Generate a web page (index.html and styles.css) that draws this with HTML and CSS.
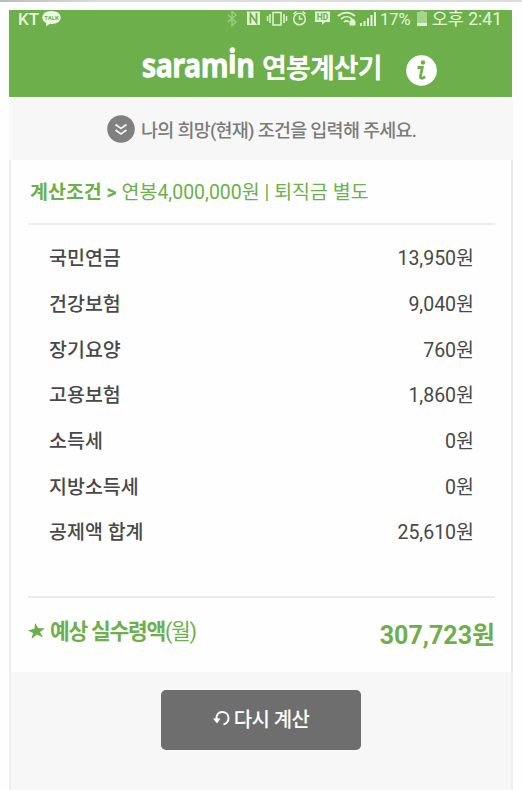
FILE: index.html
```html
<!DOCTYPE html>
<html lang="ko">
<head>
    <meta charset="UTF-8">
    <meta name="viewport" content="width=device-width, initial-scale=1.0">
    <title>saramin 연봉계산기</title>
    <link rel="stylesheet" href="styles.css">
</head>
<body>
    <div class="top-line"></div>
    <div class="app">
        <header class="header">
            <div class="status-bar">
                <div class="status-left">
                    <span>KT</span>
                    <svg class="talk" width="19" height="16" viewBox="0 0 19 16">
                        <path d="M9.500 0C4 0 .3 2.800.3 6.500c0 2.500 1.500 4.500 4 5.600L4 15.500l3.800-2.700c6 .8 10.900-2 10.900-6.300C18.700 2.800 15 0 9.500 0z" fill="#eefbe4"/>
                        <text x="9.500" y="8.800" text-anchor="middle">TALK</text>
                    </svg>
                </div>
                <div class="status-right">
                    <svg width="133" height="18" viewBox="0 0 133 18" fill="none" stroke="#e0f5d0" stroke-width="1.500">
                        <path d="M1 5l8 7-4 3.500V1.500L9 5l-8 7" opacity=".45" stroke-width="1.300"/>
                        <path d="M20 1.500h13V15H20z" fill="#e0f5d0" stroke="none"/>
                        <path d="M23.500 13.500V4l6 8.500V3" stroke="#6db04b" stroke-width="1.800"/>
                        <path d="M46 2.500h8v12.500h-8zM43 4v9M57 4v9M40.500 6v5M59.500 6v5"/>
                        <circle cx="72.500" cy="9" r="5.800"/>
                        <path d="M72.500 5.500V9h3M66.500 4l3-2.500M78.500 4l-3-2.500"/>
                        <path d="M88 1.500h15v10.500h-5l-3 3v-3h-7z" fill="#e0f5d0" stroke="none"/>
                        <text x="95.500" y="9.800" text-anchor="middle">HD</text>
                        <path d="M111 6c5-4.500 12-4.500 17 0M114 9c3.500-3 8-3 11 0M117 12c2-1.500 3.500-1.500 5 0" stroke-width="1.700"/>
                        <path d="M123 11h5v4h-5zM124 11V9.500h3V11" fill="#e0f5d0" stroke-width="1"/>
                    </svg>
                    <svg width="17" height="16" viewBox="0 0 17 16" fill="#e0f5d0">
                        <path d="M0 12h2v3H0zM3.500 10h2v5h-2zM7 7h2v8H7zM10.500 4h2v11h-2zM14 1h2v14h-2z"/>
                    </svg>
                    <span class="percent">17%</span>
                    <svg width="10" height="16" viewBox="0 0 10 16" fill="#e0f5d0">
                        <path d="M3 0h4v1h3v11H0V1h3z" opacity=".5"/>
                        <path d="M0 12h10v3H0z"/>
                    </svg>
                    <span class="time">오후 2:41</span>
                </div>
            </div>
            <h1 class="title">
                <svg class="logo" width="116" height="36" viewBox="0 0 116 36">
                    <g transform="scale(.89 1)">
                        <text x="1" y="29">saram<tspan dy="-4.500">i</tspan><tspan dy="4.500">n</tspan></text>
                    </g>
                </svg>
                <span class="title-text">연봉계산기</span>
                <svg class="info" width="31" height="31" viewBox="0 0 31 31">
                    <circle cx="15.500" cy="15.500" r="15.300" fill="#fff"/>
                    <circle cx="17" cy="7.500" r="2.200" fill="#6db04b"/>
                    <path d="M11.500 12.500h4.800l-1.800 8.500q-.5 2.500 1.500 2.300 1.500-.2 3-2" fill="none" stroke="#6db04b" stroke-width="2.800"/>
                </svg>
            </h1>
        </header>

        <div class="guide">
            <svg width="28" height="28" viewBox="0 0 28 28" fill="none" stroke="#f4f4f4" stroke-width="1.800">
                <circle cx="14" cy="14" r="13.800" fill="#808080" stroke="none"/>
                <path d="M8.500 9.500l5.500 4 5.500-4M8.500 15l5.500 4 5.500-4"/>
            </svg>
            <span>나의 희망(현재) 조건을 입력해 주세요.</span>
        </div>

        <main class="result">
            <p class="condition"><b>계산조건 &gt;</b> 연봉4,000,000원 | 퇴직금 별도</p>
            <dl class="list">
                <div class="row"><dt>국민연금</dt><dd>13,950원</dd></div>
                <div class="row"><dt>건강보험</dt><dd>9,040원</dd></div>
                <div class="row"><dt>장기요양</dt><dd>760원</dd></div>
                <div class="row"><dt>고용보험</dt><dd>1,860원</dd></div>
                <div class="row"><dt>소득세</dt><dd>0원</dd></div>
                <div class="row"><dt>지방소득세</dt><dd>0원</dd></div>
                <div class="row"><dt>공제액 합계</dt><dd>25,610원</dd></div>
            </dl>
            <div class="total">
                <div class="total-label">
                    <svg width="17" height="16" viewBox="0 0 17 16" fill="#6db04b">
                        <path d="M7 0l3.200 5 6.800.5-5 3.500 3 5.500-6-3-5.500 4.500 1.500-6L0 7.500l6.500-1.700z"/>
                    </svg>
                    <span><b>예상 실수령액</b>(월)</span>
                </div>
                <strong class="total-value">307,723원</strong>
            </div>
        </main>

        <footer class="footer">
            <button class="reset">
                <svg width="17" height="17" viewBox="0 0 17 17" fill="none" stroke="#fff" stroke-width="2">
                    <path d="M3.500 9C3 5 5.500 2 9 2c4 0 6.500 2.500 6.500 6 0 3.500-2 5.500-5 6.500"/>
                    <path d="M0 8.500h7.500L4 13.500z" fill="#fff" stroke="none"/>
                </svg>
                <span>다시 계산</span>
            </button>
        </footer>
    </div>
</body>
</html>
```
FILE: styles.css
```css
* {
    box-sizing: border-box;
    margin: 0;
    padding: 0;
}
body {
    width: 522px;
    height: 790px;
    overflow: hidden;
    background-color: #fefefe;
    font-family: Roboto, "Noto Sans CJK KR", sans-serif;
    font-size: 19.500px;
    color: #484848;
}
.top-line {
    height: 2px;
    margin-bottom: 8px;
    background: linear-gradient(to right, #bbb, #ddd 100px);
}
.app {
    display: flex;
    flex-direction: column;
    width: 504px;
    height: 780px;
    margin-left: 9px;
}
.header {
    width: 503px;
    height: 87px;
    background-color: #6db04b;
    color: #fff;
}
.status-bar {
    display: flex;
    justify-content: space-between;
    height: 18px;
    padding: 0 10px 0 9px;
    line-height: 17px;
    color: #e6f7da;
}
.status-left,
.status-right {
    display: flex;
    align-items: center;
}
.status-left {
    gap: 3px;
    font-size: 17px;
    font-weight: 500;
}
.talk text {
    font-size: 6px;
    font-weight: 700;
    fill: #6db04b;
}
.status-right {
    font-size: 17.500px;
}
.status-right text {
    font-size: 8.500px;
    font-weight: 700;
    fill: #6db04b;
    stroke: none;
}
.percent {
    margin: 0 6px 0 3px;
    font-size: 16.500px;
}
.time {
    margin-left: 5px;
    white-space: nowrap;
}
.title {
    display: flex;
    align-items: center;
    height: 69px;
    padding: 7px 0 0 132px;
    font-size: 27px;
}
.logo {
    overflow: visible;
}
.logo text {
    font-family: "Noto Sans", sans-serif;
    font-size: 32px;
    font-weight: 600;
    fill: #fff;
    stroke: #fff;
    stroke-width: 1.400px;
    stroke-linejoin: round;
}
.title-text {
    width: 122px;
    margin-left: 5px;
    letter-spacing: -0.900px;
    white-space: nowrap;
}
.info {
    margin: 8px 0 0 22px;
}
.guide {
    display: flex;
    align-items: center;
    gap: 6px;
    height: 63px;
    padding-left: 98px;
    border-top: 3px solid #fafdf8;
    background-color: #f7f7f7;
    font-size: 18.500px;
    font-weight: 500;
    letter-spacing: -0.750px;
    color: #7c7c7c;
    white-space: nowrap;
}
.guide span {
    margin-top: -3px;
}
.guide svg {
    margin-top: -2px;
}
.result {
    height: 512px;
    padding: 0 16px 0 17px;
    border: solid #ececec;
    border-width: 0 2px;
    background-color: #fefefe;
}
.condition {
    height: 65px;
    padding-left: 2px;
    border-bottom: 2px solid #eee;
    line-height: 66px;
    color: #6db04b;
    white-space: nowrap;
}
.list {
    height: 373px;
    padding: 9px 21px 0 21px;
    border-bottom: 2px solid #eaeaea;
}
.row {
    display: flex;
    justify-content: space-between;
    align-items: center;
    height: 45.700px;
}
.row dt {
    font-weight: 500;
}
.total {
    display: flex;
    justify-content: space-between;
    color: #6db04b;
}
.total-label {
    display: flex;
    align-items: center;
    gap: 5px;
    height: 62px;
    font-size: 21.500px;
    letter-spacing: -1.300px;
}
.total-label svg {
    margin-top: 4px;
}
.total-value {
    line-height: 76px;
    font-size: 25px;
}
.footer {
    flex: 1;
    padding-top: 18px;
    border: solid #efefef;
    border-width: 0 2px;
    background-color: #f7f7f7;
}
.reset {
    display: flex;
    justify-content: center;
    align-items: center;
    gap: 4px;
    width: 200px;
    height: 60px;
    margin: 0 auto;
    padding-bottom: 3px;
    border: none;
    border-radius: 5px;
    background-color: #6e6e6e;
    color: #fff;
    font-family: inherit;
    font-size: 20px;
    font-weight: 500;
    letter-spacing: -0.600px;
}
```
